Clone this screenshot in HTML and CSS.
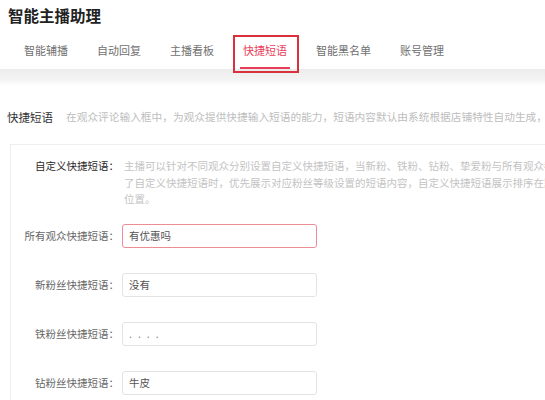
FILE: index.html
```html
<!DOCTYPE html>
<html lang="zh-CN">
<head>
<meta charset="utf-8">
<title>智能主播助理</title>
<link rel="stylesheet" href="styles.css">
</head>
<body>
<div class="page">
  <h1 class="title">智能主播助理</h1>
  <nav class="tabs">
    <span class="tab">智能辅播</span>
    <span class="tab">自动回复</span>
    <span class="tab">主播看板</span>
    <span class="tab active">快捷短语</span>
    <span class="tab">智能黑名单</span>
    <span class="tab">账号管理</span>
  </nav>
  <div class="band"></div>
  <div class="intro">
    <span class="intro-label">快捷短语</span>
    <span class="intro-desc">在观众评论输入框中，为观众提供快捷输入短语的能力，短语内容默认由系统根据店铺特性自动生成，</span>
  </div>
  <section class="card">
    <div class="row info">
      <span class="row-label">自定义快捷短语：</span>
      <p class="info-text">主播可以针对不同观众分别设置自定义快捷短语，当新粉、铁粉、钻粉、挚爱粉与所有观众都设置<br>了自定义快捷短语时，优先展示对应粉丝等级设置的短语内容，自定义快捷短语展示排序在默认短语之前的<br>位置。</p>
    </div>
    <div class="row field">
      <label class="row-label">所有观众快捷短语：</label>
      <input class="input error" type="text" value="有优惠吗">
    </div>
    <div class="row field">
      <label class="row-label">新粉丝快捷短语：</label>
      <input class="input" type="text" value="没有">
    </div>
    <div class="row field">
      <label class="row-label">铁粉丝快捷短语：</label>
      <input class="input dots" type="text" value="....">
    </div>
    <div class="row field">
      <label class="row-label">钻粉丝快捷短语：</label>
      <input class="input" type="text" value="牛皮">
    </div>
  </section>
</div>
</body>
</html>
```

FILE: styles.css
```css
* { box-sizing: border-box; }
html, body { margin: 0; padding: 0; background: #fff; }
body {
  width: 545px;
  height: 400px;
  overflow: hidden;
  font-family: "Noto Sans CJK SC", "Noto Sans", sans-serif;
  color: #333;
}
.page { width: 720px; }

.title {
  margin: 0;
  padding: 3px 0 0 8px;
  font-size: 15.5px;
  line-height: 24px;
  font-weight: 700;
  color: #222;
}

.tabs {
  display: flex;
  gap: 29px;
  padding-left: 24px;
  margin-top: 5px;
  height: 37px;
}
.tab {
  position: relative;
  font-size: 11px;
  line-height: 37px;
  color: #707070;
  white-space: nowrap;
}
.tab.active { color: #e8405a; }
.tab.active::after {
  content: "";
  position: absolute;
  left: -3px;
  right: -3px;
  bottom: 0;
  height: 2px;
  background: #e8405a;
}
.tab.active::before {
  content: "";
  position: absolute;
  left: -10px;
  right: -12px;
  top: 3px;
  bottom: -4px;
  border: 2px solid #d9303c;
  z-index: 2;
}

.band {
  height: 17px;
  background: linear-gradient(#ececec, #f3f3f3 60%, #fff);
}

.intro {
  display: flex;
  align-items: center;
  margin-top: 21px;
  padding-left: 7px;
  line-height: 20px;
  white-space: nowrap;
}
.intro-label { font-size: 11.5px; color: #333; }
.intro-desc { margin-left: 13px; font-size: 10.7px; color: #bdbdbd; }

.card {
  margin: 17px 0 0 10px;
  border: 1px solid #eeeeee;
  border-right: none;
  padding: 13px 0 30px;
}

.row { display: flex; }
.row-label {
  width: 108px;
  flex: none;
  text-align: right;
  font-size: 10.5px;
  color: #666;
  white-space: nowrap;
}
.info { align-items: flex-start; }
.info .row-label { color: #2a2a2a; line-height: 16.5px; }
.info-text {
  margin: 0 0 0 5px;
  font-size: 10.5px;
  line-height: 16.5px;
  color: #c3c3c3;
  white-space: nowrap;
}

.field { align-items: center; margin-top: 25px; }
.info + .field { margin-top: 16px; }

.input {
  width: 195px;
  height: 24px;
  margin: 0 0 0 3px;
  padding: 0 0 0 6px;
  border: 1px solid #e3e3e3;
  border-radius: 3px;
  font-family: inherit;
  font-size: 10.5px;
  color: #555;
  background: #fff;
  outline: none;
}
.input.error { border-color: #ec8c96; }
.input.dots { letter-spacing: 6px; color: #888; }
```
